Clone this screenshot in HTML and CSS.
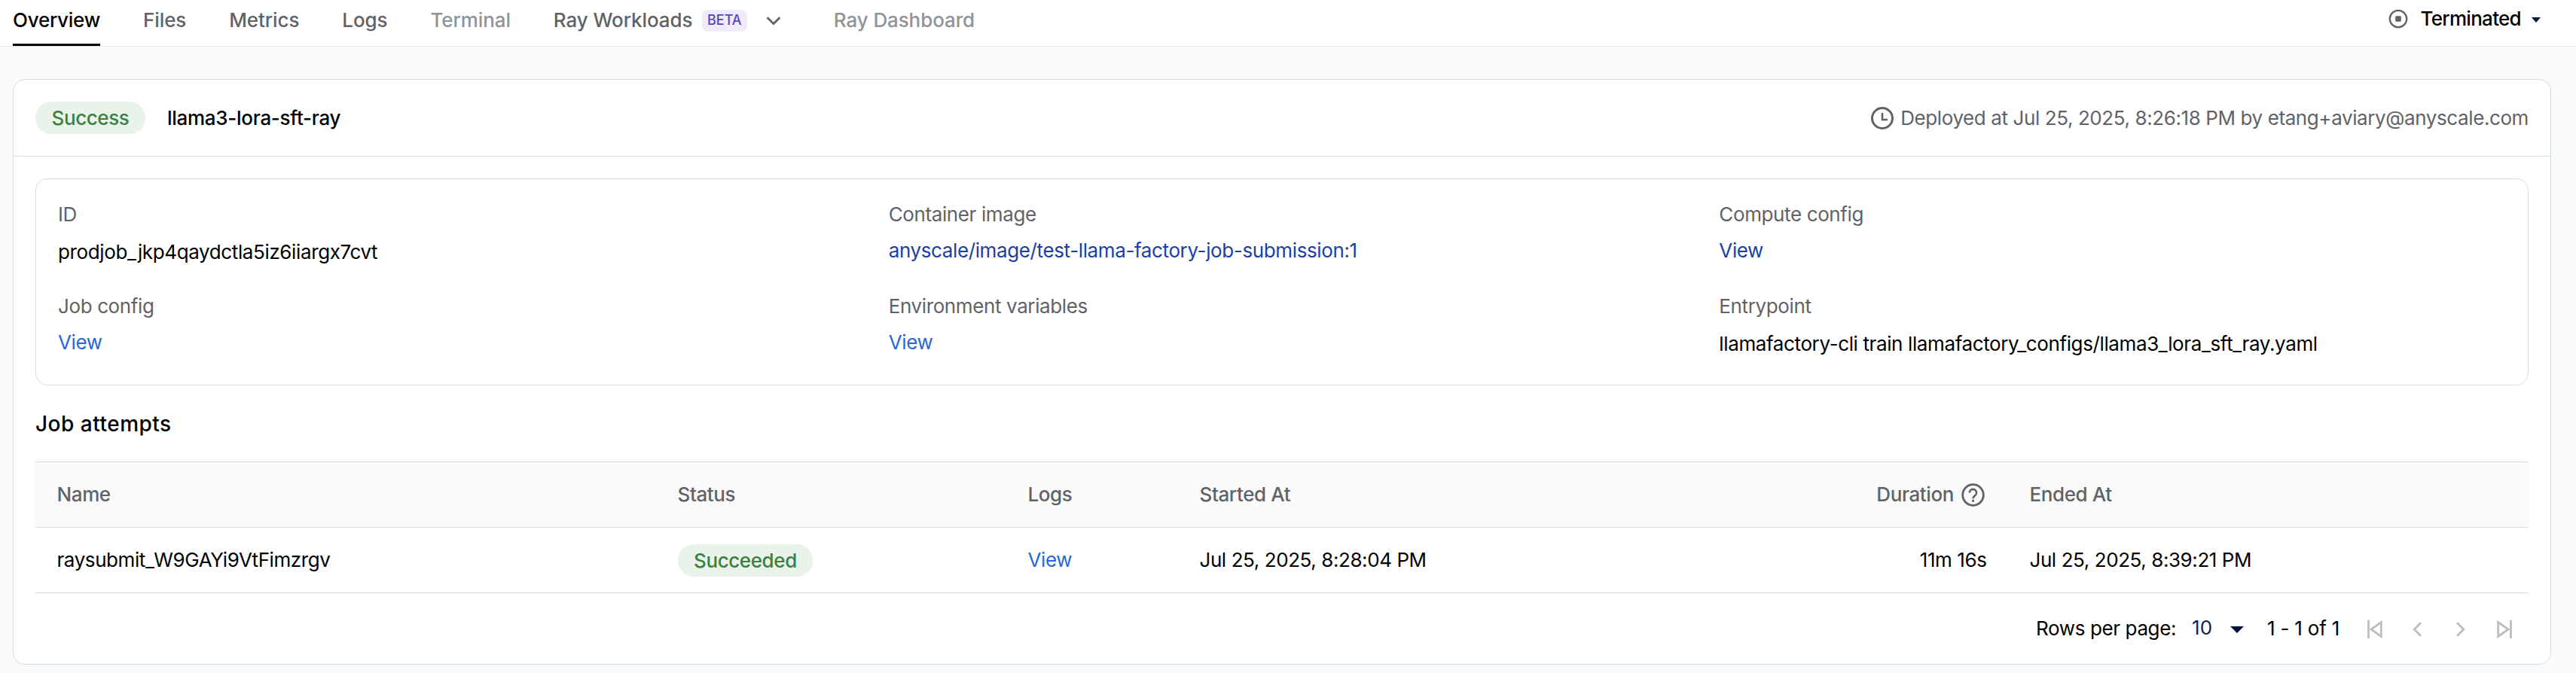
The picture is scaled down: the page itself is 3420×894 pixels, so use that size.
FILE: index.html
```html
<!DOCTYPE html>
<html lang="en">
<head>
<meta charset="utf-8">
<title>llama3-lora-sft-ray</title>
<link rel="stylesheet" href="styles.css">
</head>
<body>
<header class="topbar">
  <nav class="tabs">
    <a class="tab tab-active">Overview</a>
    <a class="tab">Files</a>
    <a class="tab">Metrics</a>
    <a class="tab">Logs</a>
    <a class="tab tab-disabled">Terminal</a>
    <a class="tab"><span>Ray Workloads</span><span class="beta">BETA</span><svg class="chevron" width="20" height="12" viewBox="0 0 20 12"><path d="M1.600 1.200 10 9.600l8.400-8.400" fill="none" stroke="#5f6368" stroke-width="2.800"/></svg></a>
    <a class="tab tab-disabled">Ray Dashboard</a>
  </nav>
  <div class="state">
    <svg width="26" height="26" viewBox="0 0 26 26"><circle cx="13" cy="13" r="11.200" fill="none" stroke="#5f6368" stroke-width="2.300"/><rect x="9.200" y="9.200" width="7.600" height="7.600" rx="1" fill="#5f6368"/></svg>
    <span class="state-text">Terminated</span>
    <svg class="state-caret" width="12" height="7" viewBox="0 0 12 7"><path d="M0 0h12L6 7z" fill="#0b1a3f"/></svg>
  </div>
</header>
<main class="card">
  <div class="card-head">
    <span class="badge">Success</span>
    <span class="job-name">llama3-lora-sft-ray</span>
    <span class="deployed"><svg width="30" height="30" viewBox="0 0 30 30"><circle cx="15" cy="15" r="13.500" fill="none" stroke="#5f6368" stroke-width="3"/><path d="M15 8v9h7" fill="none" stroke="#5f6368" stroke-width="2.600"/></svg><span class="deployed-text">Deployed at Jul 25, 2025, 8:26:18 PM by etang+aviary@anyscale.com</span></span>
  </div>
  <section class="details">
    <div class="field"><div class="label">ID</div><div class="value">prodjob_jkp4qaydctla5iz6iiargx7cvt</div></div>
    <div class="field"><div class="label">Container image</div><a class="value link-dark">anyscale/image/test-llama-factory-job-submission:1</a></div>
    <div class="field"><div class="label">Compute config</div><a class="value link-dark">View</a></div>
    <div class="field"><div class="label">Job config</div><a class="value link">View</a></div>
    <div class="field"><div class="label">Environment variables</div><a class="value link">View</a></div>
    <div class="field"><div class="label">Entrypoint</div><div class="value">llamafactory-cli train llamafactory_configs/llama3_lora_sft_ray.yaml</div></div>
  </section>
  <h2 class="heading">Job attempts</h2>
  <section class="table">
    <div class="row row-head">
      <div>Name</div><div>Status</div><div>Logs</div><div>Started At</div>
      <div class="duration duration-head"><span>Duration</span><svg width="31" height="31" viewBox="0 0 31 31"><circle cx="15.500" cy="15.500" r="13.800" fill="none" stroke="#5f6368" stroke-width="2.800"/><path d="M10.900 12.600a4.600 4.600 0 1 1 7.700 3.300c-1.700 1.500-3 2.200-3 4.300" fill="none" stroke="#5f6368" stroke-width="2.600"/><rect x="14.100" y="21.800" width="2.900" height="2.900" fill="#5f6368"/></svg></div>
      <div>Ended At</div>
    </div>
    <div class="row row-body">
      <div>raysubmit_W9GAYi9VtFimzrgv</div><div class="status"><span class="badge">Succeeded</span></div><div><a class="link">View</a></div><div>Jul 25, 2025, 8:28:04 PM</div>
      <div class="duration">11m 16s</div>
      <div>Jul 25, 2025, 8:39:21 PM</div>
    </div>
  </section>
  <footer class="pager">
    <span class="pager-label">Rows per page:</span>
    <span class="pager-size">10</span>
    <svg class="pager-caret" width="18" height="9" viewBox="0 0 18 9"><path d="M0 0h18L9 9z" fill="#03123a"/></svg>
    <span class="pager-range">1 - 1 of 1</span>
    <span class="pager-buttons">
      <svg width="20" height="26" viewBox="0 0 20 26"><path d="M1.500 2v22" stroke-linecap="round"/><path d="M18.300 3.500v19L5 13z"/></svg>
      <svg width="12" height="20" viewBox="0 0 12 20"><path d="M10.800 1.200 2.200 10l8.600 8.800"/></svg>
      <svg width="12" height="20" viewBox="0 0 12 20"><path d="M1.200 1.200 9.800 10l-8.600 8.800"/></svg>
      <svg width="20" height="26" viewBox="0 0 20 26"><path d="M18.500 2v22" stroke-linecap="round"/><path d="M1.700 3.500v19L15 13z"/></svg>
    </span>
  </footer>
</main>
</body>
</html>
```
FILE: styles.css
```css
* { box-sizing: border-box; }
body {
  margin: 0;
  height: 894px;
  overflow: hidden;
  background: #f9fafc;
  color: #000;
  font: 400 26px/36px Inter, sans-serif;
  letter-spacing: -0.38px;
  white-space: nowrap;
}
svg { display: block; flex: none; }
.topbar {
  display: flex;
  justify-content: space-between;
  height: 62px;
  padding: 0 47px 0 17px;
  background: #fff;
  border-bottom: 1px solid #e4e6ea;
}
.tabs { display: flex; gap: 57px; font-weight: 500; color: #5f6368; letter-spacing: -0.1px; }
.tab { display: flex; height: 61px; padding-top: 9px; }
.tab-active { color: #000; border-bottom: 3px solid #000; letter-spacing: -0.25px; }
.tab-disabled { color: #909398; }
.beta {
  width: 60px;
  height: 29px;
  margin: 4px 25px 0 12.5px;
  border-radius: 8px;
  background: #f1ebf9;
  color: #5646c4;
  font-size: 18px;
  line-height: 28px;
  letter-spacing: 0;
  text-align: center;
}
.chevron { margin: 13px 13px 0 0; }
.state { display: flex; font-weight: 500; letter-spacing: -0.7px; }
.state > svg:first-child { margin-top: 12px; }
.state-text { margin: 7px 14px 0 16px; }
.state-caret { margin-top: 23px; }
.card {
  width: 3370px;
  height: 778px;
  margin: 43px 0 0 17px;
  background: #fff;
  border: 1px solid #d5dde6;
  border-radius: 16px;
}
.card-head {
  display: flex;
  align-items: center;
  height: 102px;
  padding: 0 29px;
  border-bottom: 1px solid #d5dde6;
}
.badge {
  display: block;
  width: fit-content;
  height: 43px;
  padding: 0 21.500px;
  border-radius: 21px;
  background: #eaf3ea;
  color: #3b8042;
  font-weight: 500;
  line-height: 43px;
  letter-spacing: -0.4px;
}
.job-name { margin-left: 29px; font-weight: 500; letter-spacing: -0.28px; }
.deployed { display: flex; align-items: center; gap: 9.5px; margin-left: auto; color: #5f6368; letter-spacing: -0.4px; }
.details {
  display: grid;
  grid-template-columns: repeat(3, 1fr);
  grid-template-rows: 122px 122px;
  height: 275px;
  margin: 29px 29px 0;
  padding-top: 29px;
  border: 1px solid #d5dde6;
  border-radius: 16px;
}
.field { padding-left: 29px; }
.label { color: #5f6368; }
.value { display: block; margin-top: 14px; }
.link { color: #2a66d9; }
.link-dark { color: #1a40a8; }
a.value { margin-top: 12px; }
.heading {
  margin: 33px 29px 0;
  font-size: 28px;
  font-weight: 500;
  line-height: 36px;
  letter-spacing: 0.5px;
}
.table { margin: 32px 29px 0; border-top: 1px solid #d5dde6; }
.row {
  display: grid;
  grid-template-columns: 824px 465px 228px 900px 202px 1fr;
  align-items: center;
  height: 87px;
  padding-left: 28.500px;
  border-bottom: 1px solid #d5dde6;
}
.row-head { background: #fafafa; border-bottom-color: #dedede; color: #5f6368; font-weight: 500; letter-spacing: -0.4px; }
.row-body { letter-spacing: -0.42px; }
.duration { display: flex; justify-content: flex-end; align-items: center; gap: 10px; padding-right: 57px; }
.duration-head { padding-right: 59.5px; }
.pager { display: flex; height: 94px; padding: 30px 51px 0 0; justify-content: flex-end; }
.pager-label { margin-top: -1px; letter-spacing: -0.38px; }
.pager-size { margin: -2px 24px 0 21px; color: #12204a; letter-spacing: 0; }
.pager-caret { margin-top: 14px; }
.pager-range { margin: -1px 37px 0 31px; letter-spacing: -0.22px; }
.pager-buttons { display: flex; width: 192px; height: 36px; align-items: center; gap: 40px; }
.pager-buttons svg:nth-child(3) { margin: 0 0 0 6px; }
.pager-buttons svg:nth-child(4) { margin-left: auto; }
.pager-buttons path { fill: none; stroke: #bdbdbd; stroke-width: 2.800; }
```
